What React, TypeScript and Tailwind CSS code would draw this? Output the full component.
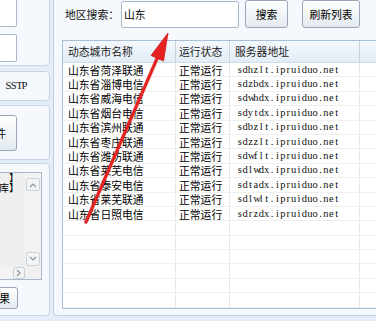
import React from "react";

const rows: [string, string][] = [
  ["山东省菏泽联通", "sdhzlt.ipruiduo.net"],
  ["山东省淄博电信", "sdzbdx.ipruiduo.net"],
  ["山东省威海电信", "sdwhdx.ipruiduo.net"],
  ["山东省烟台电信", "sdytdx.ipruiduo.net"],
  ["山东省滨州联通", "sdbzlt.ipruiduo.net"],
  ["山东省枣庄联通", "sdzzlt.ipruiduo.net"],
  ["山东省潍坊联通", "sdwflt.ipruiduo.net"],
  ["山东省莱芜电信", "sdlwdx.ipruiduo.net"],
  ["山东省泰安电信", "sdtadx.ipruiduo.net"],
  ["山东省莱芜联通", "sdlwlt.ipruiduo.net"],
  ["山东省日照电信", "sdrzdx.ipruiduo.net"],
];

function Mono({ t }: { t: string }) {
  return (
    <span className="inline-flex font-['Liberation_Serif',serif] text-[10.5px] text-[#111]">
      {t.split("").map((c, i) => (
        <span key={i} className="inline-block w-[5.4px] text-center">
          {c}
        </span>
      ))}
    </span>
  );
}

function Chev({ d }: { d: string }) {
  return (
    <svg width="8" height="6" viewBox="0 0 8 6">
      <polyline points={d} fill="none" stroke="#8d96a0" strokeWidth="1.2" />
    </svg>
  );
}

function Btn({ children, className }: { children?: React.ReactNode; className: string }) {
  return (
    <div
      className={
        "rounded-[3px] border border-[#97a7b8] bg-linear-to-b from-[#ffffff] to-[#e4eaf0] flex items-center " +
        className
      }
    >
      {children}
    </div>
  );
}

export default function App() {
  return (
    <div className="relative w-[376px] h-[321px] overflow-hidden bg-[#e5eef8] font-['Noto_Sans_CJK_SC',sans-serif] text-[10.8px] text-black">
      <div className="flex gap-[3px] mt-[-10px] ml-[-70px]">
        {/* Left column */}
        <div className="w-[120px] shrink-0 flex flex-col">
          <div className="h-[76px] rounded-[4px] border border-[#c4d4e4] bg-[#f5f8fc] flex flex-col items-end pr-[32px]">
            <div className="w-[80px] h-[36px] bg-white border border-[#aab9c9] rounded-[2px]" />
            <div className="w-[80px] h-[28px] mt-[7px] bg-white border border-[#aab9c9] rounded-[2px]" />
          </div>
          <div className="mt-[5px] h-[30px] rounded-[4px] border border-[#c4d4e4] bg-[#f5f8fc] flex items-center justify-end pr-[22px] whitespace-nowrap">
            <Mono t="/ SSTP" />
          </div>
          <div className="mt-[4px] h-[55px] rounded-[4px] border border-[#c4d4e4] bg-[#f5f8fc] flex flex-col items-end pt-[9px] pr-[32px]">
            <Btn className="w-[70px] h-[36px] justify-end pr-[10px] whitespace-nowrap">
              <span>选择文件</span>
            </Btn>
          </div>
          <div className="mt-[3px] h-[153px] rounded-[4px] border border-[#c4d4e4] bg-[#f5f8fc] flex flex-col items-end pt-[8px]">
            <div className="mr-[7px] w-[100px] h-[108px] border border-[#a9b8c8] bg-[#efefef] flex flex-col">
              <div className="flex flex-1 min-h-0">
                <div className="flex-1 overflow-hidden text-right pr-[6px] leading-[10px] whitespace-nowrap text-[10px]">
                  <div>】</div>
                  <div>【数据库】</div>
                </div>
                <div className="w-[16px] bg-[#f3f3f3] flex flex-col justify-between pt-[5px] pb-[1px] items-center">
                  <div className="w-[14px] h-[13px] rounded-[2px] border border-[#cbd1d8] bg-[#f2f4f6] flex items-center justify-center">
                    <Chev d="1,5 4,2 7,5" />
                  </div>
                  <div className="w-[14px] h-[14px] rounded-[2px] border border-[#cbd1d8] bg-[#f2f4f6] flex items-center justify-center">
                    <Chev d="1,1 4,4 7,1" />
                  </div>
                </div>
              </div>
              <div className="h-[12px] flex">
                <div className="flex-1 bg-[#f3f3f3] flex justify-end">
                  <div className="w-[12px] h-[12px] rounded-[2px] border border-[#cbd1d8] bg-[#f2f4f6] flex items-center justify-center">
                    <svg width="6" height="8" viewBox="0 0 6 8">
                      <polyline points="1,1 4,4 1,7" fill="none" stroke="#8d96a0" strokeWidth="1.2" />
                    </svg>
                  </div>
                </div>
                <div className="w-[16px] bg-[#f0f0f0]" />
              </div>
            </div>
            <Btn className="mt-[7px] mr-[31px] w-[70px] h-[22px] justify-end pr-[7px] whitespace-nowrap">
              <span>查看结果</span>
            </Btn>
          </div>
        </div>

        {/* Right panel */}
        <div className="w-[360px] shrink-0 rounded-[4px] border border-[#bfd0e2] bg-[#f5f8fc] pt-[9px] px-[8px] pb-[6px]">
          <div className="flex h-[28px] items-center">
            <div className="ml-[3px] w-[56px] whitespace-nowrap text-[#111]">地区搜索：</div>
            <div className="self-end w-[118px] h-[27px] bg-white border border-[#a8b8c8] rounded-[2px] flex items-center pl-[2px]">
              山东
            </div>
            <Btn className="ml-[6px] w-[43px] h-[28px] justify-center">
              <span>搜索</span>
            </Btn>
            <Btn className="ml-[14px] w-[58px] h-[28px] justify-center whitespace-nowrap">
              <span>刷新列表</span>
            </Btn>
          </div>

          <div className="mt-[12px] border border-[#a9bfd5] bg-white">
            <div className="flex h-[22px] border-b border-[#cfdbe7] bg-linear-to-b from-[#f4f8fc] to-[#e3ecf6] text-[#1c1c1c] whitespace-nowrap">
              <div className="w-[113px] border-r border-[#c6d4e2] pl-[5px] flex items-center">动态城市名称</div>
              <div className="w-[54px] border-r border-[#c6d4e2] pl-[3px] flex items-center">运行状态</div>
              <div className="w-[130px] border-r border-[#c6d4e2] pl-[5px] flex items-center">服务器地址</div>
              <div className="flex-1" />
            </div>
            {Array.from({ length: 17 }).map((_, i) => {
              const r = rows[i];
              return (
                <div key={i} className="flex h-[14.4px] border-b border-[#efefef] whitespace-nowrap leading-[14px]">
                  <div className="w-[113px] border-r border-[#e8e8e8] pl-[5px] flex items-center">{r ? r[0] : ""}</div>
                  <div className="w-[54px] border-r border-[#e8e8e8] pl-[3px] flex items-center">{r ? "正常运行" : ""}</div>
                  <div className="w-[130px] border-r border-[#e8e8e8] pl-[7px] flex items-center">
                    {r ? <Mono t={r[1]} /> : null}
                  </div>
                  <div className="flex-1" />
                </div>
              );
            })}
          </div>
        </div>
      </div>

      {/* Red annotation arrow */}
      <svg className="absolute left-0 top-0 pointer-events-none" width="376" height="321" viewBox="0 0 376 321">
        <line x1="86" y1="222" x2="159" y2="54" stroke="#b81418" strokeWidth="4" strokeLinecap="round" opacity="0.35" />
        <line x1="86" y1="222" x2="159" y2="54" stroke="#e5221f" strokeWidth="3" strokeLinecap="round" />
        <polygon points="168,33 163.5,61 151,55.5" fill="#e5221f" stroke="#d01a1a" strokeWidth="0.8" strokeLinejoin="round" />
      </svg>
    </div>
  );
}
